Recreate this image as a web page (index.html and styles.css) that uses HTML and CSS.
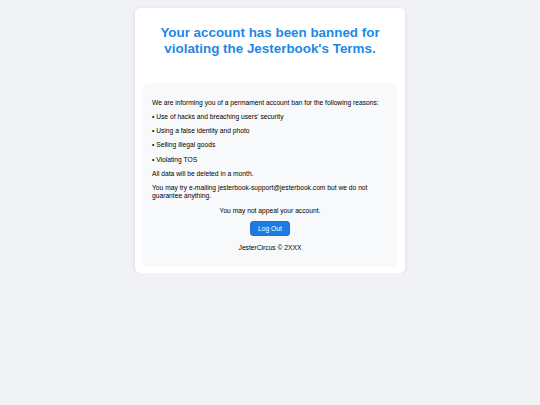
FILE: index.html
```html
<!DOCTYPE html>
<html>
<head>
<meta charset="utf-8">
<link rel="stylesheet" href="styles.css">
</head>
<body>
<div class="card">
  <h1 class="title">Your account has been banned for violating the Jesterbook's Terms.</h1>
  <div class="panel">
    <p>We are informing you of a permament account ban for the following reasons:</p>
    <p>• Use of hacks and breaching users' security</p>
    <p>• Using a false identity and photo</p>
    <p>• Selling illegal goods</p>
    <p>• Violating TOS</p>
    <p>All data will be deleted in a month.</p>
    <p>You may try e-mailing jesterbook-support@jesterbook.com but we do not guarantee anything.</p>
    <p class="center">You may not appeal your account.</p>
    <div class="center"><button class="btn">Log Out</button></div>
    <p class="center footer">JesterCircus © 2XXX</p>
  </div>
</div>
</body>
</html>
```
FILE: styles.css
```css
html, body {
  margin: 0;
  padding: 0;
  background: #f0f2f5;
  font-family: "Liberation Sans", Arial, sans-serif;
}
body {
  padding-top: 8px;
}
.card {
  width: 254px;
  margin: 0 auto;
  background: #ffffff;
  border-radius: 5px;
  box-shadow: 0 1px 4px rgba(0,0,0,0.1);
  padding: 8px 8px 6px;
}
.title {
  margin: 9px 0 0;
  height: 58px;
  color: #1e88e5;
  font-size: 13.4px;
  line-height: 16px;
  font-weight: bold;
  text-align: center;
}
.panel {
  background: #f8f9fb;
  border-radius: 5px;
  padding: 10.5px 9px 8.5px;
  font-size: 6.7px;
  line-height: 8.25px;
  color: #000;
}
.panel p {
  margin: 5px 0 6px;
}
.center {
  text-align: center;
}
.btn {
  font-family: "Liberation Sans", Arial, sans-serif;
  font-size: 6.7px;
  background: #1e7be6;
  color: #fff;
  border: 1px solid #2b6fc2;
  border-radius: 3px;
  width: 40px;
  height: 15px;
  padding: 0;
  margin-top: 0;
}
.panel .footer {
  margin-top: 8px;
}
```
